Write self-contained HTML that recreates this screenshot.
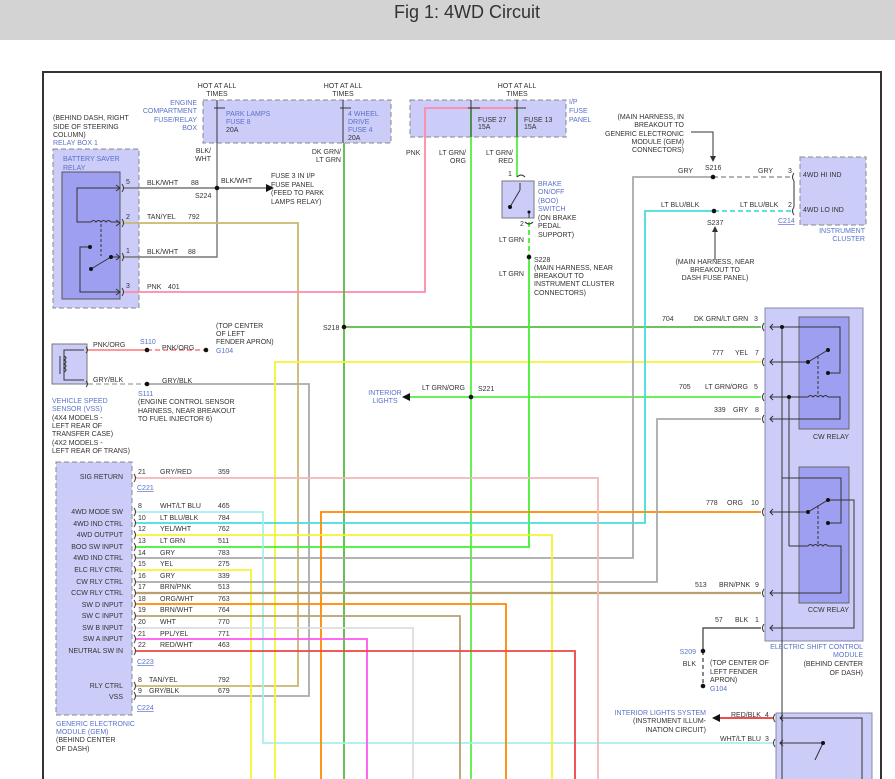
<!DOCTYPE html>
<html><head><meta charset="utf-8"><style>
html,body{margin:0;padding:0;background:#fff;width:895px;height:779px;overflow:hidden}
svg{display:block}
text{font-family:"Liberation Sans",sans-serif;font-size:7px;fill:#333}
.b{fill:#5a72c8}
.u{text-decoration:underline}
.r{text-anchor:end}
.m{text-anchor:middle}
.w{fill:none;stroke-width:1.8}
.k{stroke:#333;stroke-width:1;fill:none}
</style></head><body>
<svg width="895" height="779" viewBox="0 0 895 779" xmlns="http://www.w3.org/2000/svg">
<rect x="0" y="0" width="895" height="40" fill="#d3d3d3"/>
<text x="467" y="18" class="m" style="font-family:'Liberation Sans Narrow','Liberation Sans',sans-serif;font-size:18px;fill:#333">Fig 1: 4WD Circuit</text>
<rect x="43" y="72" width="838" height="720" fill="#fff" stroke="#333" stroke-width="2"/>

<!-- boxes -->
<rect x="203" y="100" width="188" height="43" fill="#ccccf8" stroke="#888" stroke-dasharray="5,3"/>
<rect x="410" y="100" width="156" height="37" fill="#ccccf8" stroke="#888" stroke-dasharray="5,3"/>
<rect x="53" y="149" width="86" height="159" fill="#ccccf8" stroke="#888" stroke-dasharray="5,3"/>
<rect x="62" y="172" width="58" height="127" fill="#9f9ff2" stroke="#555"/>
<rect x="52" y="344" width="35" height="40" fill="#ccccf8" stroke="#777"/>
<rect x="56" y="462" width="76" height="253" fill="#ccccf8" stroke="#888" stroke-dasharray="5,3"/>
<rect x="800" y="157" width="66" height="68" fill="#ccccf8" stroke="#888" stroke-dasharray="5,3"/>
<rect x="502" y="181" width="32" height="37" fill="#ccccf8" stroke="#777"/>
<rect x="765" y="308" width="98" height="333" fill="#ccccf8" stroke="#8888aa"/>
<rect x="799" y="317" width="50" height="112" fill="#9f9ff2" stroke="#666"/>
<rect x="799" y="467" width="50" height="136" fill="#9f9ff2" stroke="#666"/>
<rect x="776" y="713" width="96" height="80" fill="#ccccf8" stroke="#8888aa"/>

<!-- wires -->
<g class="w">
<path d="M123 188H266M217 143V257H123" stroke="#777" stroke-width="1.4"/>
<path d="M123 223H298V686H136" stroke="#c8b870"/>
<path d="M123 292H425V108H517" stroke="#ff8aa8"/>
<path d="M344 143V779M344 327H761" stroke="#55bb44"/>
<path d="M88 350H147" stroke="#ff8a8a"/>
<path d="M147 350H206" stroke="#ff8a8a" stroke-dasharray="5,3"/>
<path d="M88 384H147" stroke="#bbb" stroke-dasharray="5,3"/>
<path d="M147 384H309V696H136" stroke="#aaa"/>
<path d="M275 779V362H761" stroke="#f4f432"/>
<path d="M471 108V779M410 397H761" stroke="#55ee44"/>
<path d="M517 108V177" stroke="#55ee44"/>
<path d="M529 222V257" stroke="#44ee33" stroke-dasharray="5,3"/>
<path d="M529 257V547H136" stroke="#44ee33"/>
<path d="M713 177H633V558H136" stroke="#aaa"/>
<path d="M713 177H792" stroke="#aaa" stroke-dasharray="5,3"/>
<path d="M714 211H645V523H136" stroke="#44dddd"/>
<path d="M714 211H792" stroke="#44dddd" stroke-dasharray="5,3"/>
<path d="M136 512H263V743H773" stroke="#aaeeee"/>
<path d="M321 779V512H761" stroke="#ff8800"/>
<path d="M136 535H552V779" stroke="#f4f432"/>
<path d="M136 570H251V779" stroke="#f4f432"/>
<path d="M136 582H657V419H761" stroke="#aaa"/>
<path d="M136 593H761" stroke="#b8a070" stroke-width="2.2"/>
<path d="M136 604H506V779" stroke="#ff8800"/>
<path d="M136 616H460V779" stroke="#b8a070"/>
<path d="M136 628H413V779" stroke="#ddd"/>
<path d="M136 639H367V779" stroke="#ff55ee"/>
<path d="M136 651H575V779" stroke="#ee4444"/>
<path d="M136 478H598V779" stroke="#f0b8b8"/>
<path d="M761 628H703V651" stroke="#555" stroke-width="1.4"/>
<path d="M703 651V686" stroke="#555" stroke-width="1.4" stroke-dasharray="4,3"/>
<path d="M773 718H720" stroke="#ee3333"/>
</g>
<!-- arrows / dots -->
<path d="M266 184L274 188L266 192Z M410 393L402 397L410 401Z M720 714L712 718L720 722Z" fill="#111"/>
<path d="M691 132H713V158" class="k"/><path d="M710 156L713 162L716 156Z" fill="#333"/>
<path d="M715 260V230" class="k"/><path d="M712 232L715 226L718 232Z" fill="#333"/>
<g fill="#111">
<circle cx="217" cy="188" r="2.3"/><circle cx="344" cy="327" r="2.3"/><circle cx="147" cy="350" r="2.3"/>
<circle cx="147" cy="384" r="2.3"/><circle cx="471" cy="397" r="2.3"/><circle cx="529" cy="257" r="2.3"/>
<circle cx="713" cy="177" r="2.3"/><circle cx="714" cy="211" r="2.3"/><circle cx="703" cy="651" r="2.3"/>
<circle cx="703" cy="686" r="2.3"/><circle cx="206" cy="350" r="2.3"/>
</g>
<!-- internals -->
<g class="k">
<path d="M217 100V143M214 108H225M343 100V143M340 108H351M471 100V137M468 108H480M517 100V137M514 108H526"/>
<!-- battery saver relay -->
<path d="M120 188H77V222H91M91 222q2.5-3 5 0q2.5-3 5 0q2.5-3 5 0q2.5-3 5 0M111 222H120M91 269L111 257H120M90 247H80V292H120"/>
<path d="M101 224V256" stroke-dasharray="3,2"/>
<path d="M116 185L120 188L116 191M116 220L120 223L116 226M116 254L120 257L116 260M116 289L120 292L116 295"/>
<path d="M122 184q3 4 0 8M122 219q3 4 0 8M122 253q3 4 0 8M122 288q3 4 0 8"/>
<!-- VSS -->
<path d="M84 350H64V380H84M64 356q4 2 0 4q4 2 0 4q4 2 0 4q4 2 0 4M60 356V374M86 347q3 3 0 6M86 381q3 3 0 6"/>
<!-- GEM connector marks -->
<path d="M134 474q3 4 0 8M134 508q3 4 0 8M134 519q3 4 0 8M134 531q3 4 0 8M134 543q3 4 0 8M134 554q3 4 0 8M134 566q3 4 0 8M134 578q3 4 0 8M134 589q3 4 0 8M134 600q3 4 0 8M134 612q3 4 0 8M134 624q3 4 0 8M134 635q3 4 0 8M134 647q3 4 0 8M134 682q3 4 0 8M134 692q3 4 0 8"/>
<!-- ESCM connector marks -->
<path d="M764 323q-3 4 0 8M764 358q-3 4 0 8M764 393q-3 4 0 8M764 415q-3 4 0 8M764 508q-3 4 0 8M764 589q-3 4 0 8M764 624q-3 4 0 8M775 714q-3 4 0 8M775 739q-3 4 0 8M794 173q-3 4 0 8M794 207q-3 4 0 8M794 181V207"/>
<path d="M773 324L770 327L773 330M773 359L770 362L773 365M773 394L770 397L773 400M773 416L770 419L773 422M773 509L770 512L773 515M773 590L770 593L773 596M773 625L770 628L773 631M783 715L780 718L783 721M783 740L780 743L783 746"/>
<!-- CW relay -->
<path d="M770 327H840V373H828M782 327V779M770 362H808L828 350M770 397H808M808 397q2.5-3 5 0q2.5-3 5 0q2.5-3 5 0q2.5-3 5 0H840V419H770M789 397V546"/>
<path d="M818 356V395" stroke-dasharray="3,2"/>
<!-- CCW relay -->
<path d="M782 478H841V523H828M770 512H808L828 500H854V628H770M789 546H808M808 546q2.5-3 5 0q2.5-3 5 0q2.5-3 5 0q2.5-3 5 0H841V593H770"/>
<path d="M818 506V545" stroke-dasharray="3,2"/>
<!-- interior lights module -->
<path d="M780 718H862V779M780 743H823L815 760"/>
<!-- BOO switch -->
<path d="M510 207L520 190M520 190V183M529 212V218M517 177q4-4 8 0M525 222q4 4 8 0"/>
</g>
<g fill="#111"><circle cx="808" cy="362" r="2"/><circle cx="828" cy="350" r="2"/><circle cx="828" cy="373" r="2"/><circle cx="808" cy="512" r="2"/><circle cx="828" cy="500" r="2"/><circle cx="828" cy="523" r="2"/><circle cx="91" cy="269" r="2"/><circle cx="111" cy="257" r="2"/><circle cx="90" cy="247" r="2"/><circle cx="510" cy="207" r="2"/><circle cx="782" cy="327" r="2"/><circle cx="789" cy="397" r="2"/><circle cx="823" cy="743" r="2"/><circle cx="529" cy="212" r="1.5"/></g>

<!-- text -->
<text x="217" y="88" class="m">HOT AT ALL</text><text x="217" y="96" class="m">TIMES</text>
<text x="343" y="88" class="m">HOT AT ALL</text><text x="343" y="96" class="m">TIMES</text>
<text x="517" y="88" class="m">HOT AT ALL</text><text x="517" y="96" class="m">TIMES</text>
<text x="197" y="105" class="r b">ENGINE</text><text x="197" y="113" class="r b">COMPARTMENT</text><text x="197" y="122" class="r b">FUSE/RELAY</text><text x="197" y="130" class="r b">BOX</text>
<text x="226" y="116" class="b">PARK LAMPS</text><text x="226" y="124" class="b">FUSE 8</text><text x="226" y="132">20A</text>
<text x="348" y="116" class="b">4 WHEEL</text><text x="348" y="124" class="b">DRIVE</text><text x="348" y="132" class="b">FUSE 4</text><text x="348" y="140">20A</text>
<text x="478" y="122">FUSE 27</text><text x="478" y="129">15A</text><text x="524" y="122">FUSE 13</text><text x="524" y="129">15A</text>
<text x="569" y="104" class="b">I/P</text><text x="569" y="113" class="b">FUSE</text><text x="569" y="122" class="b">PANEL</text>
<text x="53" y="120">(BEHIND DASH, RIGHT</text><text x="53" y="129">SIDE OF STEERING</text><text x="53" y="137">COLUMN)</text><text x="53" y="145" class="b">RELAY BOX 1</text>
<text x="63" y="161" class="b">BATTERY SAVER</text><text x="63" y="170" class="b">RELAY</text>
<text x="126" y="184">5</text><text x="126" y="219">2</text><text x="126" y="253">1</text><text x="126" y="288">3</text>
<text x="147" y="185">BLK/WHT</text><text x="191" y="185">88</text><text x="195" y="198">S224</text><text x="221" y="183">BLK/WHT</text>
<text x="147" y="219">TAN/YEL</text><text x="188" y="219">792</text>
<text x="147" y="254">BLK/WHT</text><text x="188" y="254">88</text>
<text x="147" y="289">PNK</text><text x="168" y="289">401</text>
<text x="211" y="153" class="r">BLK/</text><text x="211" y="161" class="r">WHT</text>
<text x="341" y="154" class="r">DK GRN/</text><text x="341" y="162" class="r">LT GRN</text>
<text x="271" y="178">FUSE 3 IN I/P</text><text x="271" y="187">FUSE PANEL</text><text x="271" y="195">(FEED TO PARK</text><text x="271" y="204">LAMPS RELAY)</text>
<text x="406" y="155">PNK</text><text x="466" y="155" class="r">LT GRN/</text><text x="466" y="163" class="r">ORG</text>
<text x="513" y="155" class="r">LT GRN/</text><text x="513" y="163" class="r">RED</text>
<text x="508" y="176">1</text><text x="520" y="226">2</text>
<text x="538" y="186" class="b">BRAKE</text><text x="538" y="194" class="b">ON/OFF</text><text x="538" y="203" class="b">(BOO)</text><text x="538" y="211" class="b">SWITCH</text>
<text x="538" y="220">(ON BRAKE</text><text x="538" y="228">PEDAL</text><text x="538" y="237">SUPPORT)</text>
<text x="524" y="242" class="r">LT GRN</text><text x="524" y="276" class="r">LT GRN</text>
<text x="534" y="262">S228</text><text x="534" y="270">(MAIN HARNESS, NEAR</text><text x="534" y="278">BREAKOUT TO</text><text x="534" y="286">INSTRUMENT CLUSTER</text><text x="534" y="295">CONNECTORS)</text>
<text x="684" y="119" class="r">(MAIN HARNESS, IN</text><text x="684" y="127" class="r">BREAKOUT TO</text><text x="684" y="136" class="r">GENERIC ELECTRONIC</text><text x="684" y="144" class="r">MODULE (GEM)</text><text x="684" y="152" class="r">CONNECTORS)</text>
<text x="678" y="173">GRY</text><text x="705" y="170">S216</text><text x="758" y="173">GRY</text><text x="788" y="173">3</text>
<text x="661" y="207">LT BLU/BLK</text><text x="740" y="207">LT BLU/BLK</text><text x="788" y="207">2</text>
<text x="707" y="225">S237</text>
<text x="715" y="264" class="m">(MAIN HARNESS, NEAR</text><text x="715" y="272" class="m">BREAKOUT TO</text><text x="715" y="280" class="m">DASH FUSE PANEL)</text>
<text x="803" y="177">4WD HI IND</text><text x="803" y="212">4WD LO IND</text><text x="778" y="223" class="b u">C214</text>
<text x="865" y="233" class="r b">INSTRUMENT</text><text x="865" y="241" class="r b">CLUSTER</text>
<text x="323" y="330">S218</text>
<text x="662" y="321">704</text><text x="694" y="321">DK GRN/LT GRN</text><text x="754" y="321">3</text>
<text x="712" y="355">777</text><text x="735" y="355">YEL</text><text x="755" y="355">7</text>
<text x="679" y="389">705</text><text x="705" y="389">LT GRN/ORG</text><text x="754" y="389">5</text>
<text x="714" y="412">339</text><text x="733" y="412">GRY</text><text x="755" y="412">8</text>
<text x="706" y="505">778</text><text x="727" y="505">ORG</text><text x="751" y="505">10</text>
<text x="695" y="587">513</text><text x="719" y="587">BRN/PNK</text><text x="755" y="587">9</text>
<text x="715" y="622">57</text><text x="735" y="622">BLK</text><text x="755" y="622">1</text>
<text x="849" y="439" class="r">CW RELAY</text><text x="849" y="612" class="r">CCW RELAY</text>
<text x="863" y="649" class="r b">ELECTRIC SHIFT CONTROL</text><text x="863" y="657" class="r b">MODULE</text><text x="863" y="666" class="r">(BEHIND CENTER</text><text x="863" y="675" class="r">OF DASH)</text>
<text x="696" y="654" class="r b">S209</text><text x="696" y="666" class="r">BLK</text>
<text x="710" y="665">(TOP CENTER OF</text><text x="710" y="674">LEFT FENDER</text><text x="710" y="682">APRON)</text><text x="710" y="691" class="b">G104</text>
<text x="706" y="715" class="r b">INTERIOR LIGHTS SYSTEM</text><text x="706" y="723" class="r">(INSTRUMENT ILLUM-</text><text x="706" y="732" class="r">INATION CIRCUIT)</text>
<text x="731" y="717">RED/BLK</text><text x="765" y="717">4</text><text x="720" y="741">WHT/LT BLU</text><text x="765" y="741">3</text>
<text x="93" y="347">PNK/ORG</text><text x="140" y="344" class="b">S110</text><text x="162" y="350">PNK/ORG</text>
<text x="216" y="328">(TOP CENTER</text><text x="216" y="336">OF LEFT</text><text x="216" y="344">FENDER APRON)</text><text x="216" y="353" class="b">G104</text>
<text x="93" y="382">GRY/BLK</text><text x="162" y="383">GRY/BLK</text>
<text x="138" y="396" class="b">S111</text><text x="138" y="404">(ENGINE CONTROL SENSOR</text><text x="138" y="413">HARNESS, NEAR BREAKOUT</text><text x="138" y="421">TO FUEL INJECTOR 6)</text>
<text x="52" y="403" class="b">VEHICLE SPEED</text><text x="52" y="411" class="b">SENSOR (VSS)</text>
<text x="52" y="420">(4X4 MODELS -</text><text x="52" y="428">LEFT REAR OF</text><text x="52" y="436">TRANSFER CASE)</text><text x="52" y="445">(4X2 MODELS -</text><text x="52" y="453">LEFT REAR OF TRANS)</text>
<text x="385" y="395" class="m b">INTERIOR</text><text x="385" y="403" class="m b">LIGHTS</text>
<text x="422" y="390">LT GRN/ORG</text><text x="478" y="391">S221</text>
<text x="123" y="479" class="r">SIG RETURN</text><text x="123" y="514" class="r">4WD MODE SW</text><text x="123" y="526" class="r">4WD IND CTRL</text>
<text x="123" y="537" class="r">4WD OUTPUT</text><text x="123" y="549" class="r">BOO SW INPUT</text><text x="123" y="560" class="r">4WD IND CTRL</text>
<text x="123" y="572" class="r">ELC RLY CTRL</text><text x="123" y="584" class="r">CW RLY CTRL</text><text x="123" y="595" class="r">CCW RLY CTRL</text>
<text x="123" y="607" class="r">SW D INPUT</text><text x="123" y="618" class="r">SW C INPUT</text><text x="123" y="630" class="r">SW B INPUT</text>
<text x="123" y="641" class="r">SW A INPUT</text><text x="123" y="653" class="r">NEUTRAL SW IN</text><text x="123" y="688" class="r">RLY CTRL</text><text x="123" y="699" class="r">VSS</text>
<text x="138" y="474">21</text><text x="160" y="474">GRY/RED</text><text x="218" y="474">359</text>
<text x="137" y="490" class="b u">C221</text>
<text x="138" y="508">8</text><text x="160" y="508">WHT/LT BLU</text><text x="218" y="508">465</text>
<text x="138" y="520">10</text><text x="160" y="520">LT BLU/BLK</text><text x="218" y="520">784</text>
<text x="138" y="531">12</text><text x="160" y="531">YEL/WHT</text><text x="218" y="531">762</text>
<text x="138" y="543">13</text><text x="160" y="543">LT GRN</text><text x="218" y="543">511</text>
<text x="138" y="555">14</text><text x="160" y="555">GRY</text><text x="218" y="555">783</text>
<text x="138" y="566">15</text><text x="160" y="566">YEL</text><text x="218" y="566">275</text>
<text x="138" y="578">16</text><text x="160" y="578">GRY</text><text x="218" y="578">339</text>
<text x="138" y="589">17</text><text x="160" y="589">BRN/PNK</text><text x="218" y="589">513</text>
<text x="138" y="601">18</text><text x="160" y="601">ORG/WHT</text><text x="218" y="601">763</text>
<text x="138" y="612">19</text><text x="160" y="612">BRN/WHT</text><text x="218" y="612">764</text>
<text x="138" y="624">20</text><text x="160" y="624">WHT</text><text x="218" y="624">770</text>
<text x="138" y="636">21</text><text x="160" y="636">PPL/YEL</text><text x="218" y="636">771</text>
<text x="138" y="647">22</text><text x="160" y="647">RED/WHT</text><text x="218" y="647">463</text>
<text x="137" y="664" class="b u">C223</text>
<text x="138" y="682">8</text><text x="149" y="682">TAN/YEL</text><text x="218" y="682">792</text>
<text x="138" y="693">9</text><text x="149" y="693">GRY/BLK</text><text x="218" y="693">679</text>
<text x="137" y="710" class="b u">C224</text>
<text x="56" y="726" class="b">GENERIC ELECTRONIC</text><text x="56" y="734" class="b">MODULE (GEM)</text><text x="56" y="742">(BEHIND CENTER</text><text x="56" y="751">OF DASH)</text>
</svg>
</body></html>
